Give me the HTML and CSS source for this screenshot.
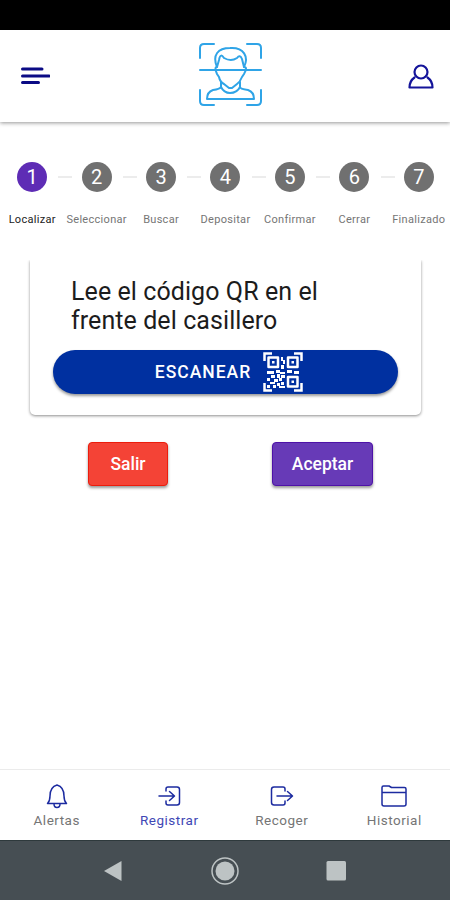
FILE: index.html
```html
<!DOCTYPE html>
<html lang="es">

<head>
    <meta charset="UTF-8">
    <meta name="viewport" content="width=device-width, initial-scale=1.0">
    <title>Registrar</title>
    <link rel="stylesheet" href="styles.css">
</head>

<body>
    <div class="status-bar"></div>
    <header class="header">
        <svg class="menu" width="30" height="20" viewBox="0 0 30 20">
            <path d="M2.500 3H22M2.500 10H29M2.500 16.500H18.500"/>
        </svg>
        <svg class="logo" width="66" height="66" viewBox="0 0 66 66">
            <path class="corner" d="M2 16V6q0-4 4-4H16M49 2H59q4 0 4 4V16M2 48V59q0 4 4 4H16M49 63H59q4 0 4-4V48"/>
            <path d="M2 28H63"/>
            <path d="M19 25C14 13 20 6 32 6C46 5 51 15 46 25"/>
            <path d="M19 25L21 18C22 12 24 13 26 16Q33 20 39 16Q42 12 44 17L46 25Q50 25 46 32L44 35Q42 40 39 42L34 46H31L26 42Q22 40 21 35L19 32Q16 25 19 25"/>
            <path d="M23 40V45Q22 47 15 48Q9 50 9 57H56Q56 50 50 48Q42 47 42 45V40M23 45Q26 51 32 51Q39 51 42 45"/>
        </svg>
        <svg class="user" width="26" height="26" viewBox="0 0 26 26">
            <circle cx="13" cy="8" r="6.5"/>
            <path d="M6.5 13.5Q1.5 17 1.5 23.5H24.5Q24.5 17 19.5 13.5"/>
        </svg>
    </header>

    <main class="main">
        <div class="steps">
            <div class="step active"><span class="number">1</span><span class="label">Localizar</span></div>
            <div class="step"><span class="number">2</span><span class="label">Seleccionar</span></div>
            <div class="step"><span class="number">3</span><span class="label">Buscar</span></div>
            <div class="step"><span class="number">4</span><span class="label">Depositar</span></div>
            <div class="step"><span class="number">5</span><span class="label">Confirmar</span></div>
            <div class="step"><span class="number">6</span><span class="label">Cerrar</span></div>
            <div class="step"><span class="number">7</span><span class="label">Finalizado</span></div>
        </div>

        <div class="card-wrap">
            <div class="card">
                <h2 class="title">Lee el código QR en el frente del casillero</h2>
                <button class="scan">
                    <span>ESCANEAR</span>
                    <svg width="40" height="40" viewBox="0 0 40 40">
                        <path class="frame" d="M1.5 9V1.5H9M31 1.5H38.5V9M1.5 31V38.5H9M31 38.5H38.5V31"/>
                        <path class="eye" d="M5.5 5.5h9.5v9.5h-9.5zM25 5.5h9.5v9.5h-9.5zM25 25h9.5v9.5h-9.5z"/>
                        <path class="dots" d="M9 9h2.5v2.5H9zM28.5 9H31v2.5h-2.5zM28.5 28.5H31V31h-2.5zM18 5h2v4h-2zM20 8h2v4h-2zM18 13h3v4h-3zM4 19h7v3H4zM13 18h4v3h-4zM17 20h5v2h-5zM24 18h5v3h-5zM31 19h5v3h-5zM8 23h4v3H8zM14 22h3v4h-3zM18 23h4v3h-4zM4 26h3v3H4zM11 27h4v3h-4zM16 26h3v3h-3zM7 30h5v2H7zM4 33h3v3H4zM10 33h3v3h-3zM14 31h3v3h-3zM18 30h3v3h-3zM16 34h6v2h-6z"/>
                    </svg>
                </button>
            </div>
        </div>

        <div class="actions">
            <button class="btn exit">Salir</button>
            <button class="btn accept">Aceptar</button>
        </div>
    </main>

    <nav class="tabs">
        <a class="tab">
            <svg width="28" height="26" viewBox="0 0 28 26">
                <path d="M4.5 20.5Q7 18 7 13Q7 4 14 2Q21 4 21 13Q21 18 23.5 20.5ZM11 21Q11 24.5 14 24.5Q17 24.5 17 21"/>
            </svg>
            <span>Alertas</span>
        </a>
        <a class="tab selected">
            <svg width="28" height="26" viewBox="0 0 28 26">
                <path d="M11 8V6q0-2 2-2H22q2.500 0 2.500 2.500V19.500q0 2.500-2.500 2.500H13q-2 0-2-2V18M4 13H19M14.500 8.500L19.500 13L14.500 17.500"/>
            </svg>
            <span>Registrar</span>
        </a>
        <a class="tab">
            <svg width="28" height="26" viewBox="0 0 28 26">
                <path d="M17 8V6q0-2-2-2H6q-2.500 0-2.500 2.500V19.500q0 2.500 2.500 2.500H15q2 0 2-2V18M9 13H24M19.500 8.500L24.500 13L19.500 17.500"/>
            </svg>
            <span>Recoger</span>
        </a>
        <a class="tab">
            <svg width="28" height="26" viewBox="0 0 28 26">
                <path d="M2 9.500V4.500Q2 3 3.500 3H9L11.500 4.500H24.500Q26 4.500 26 6V21Q26 23 24 23H4Q2 23 2 21V9.500H26"/>
            </svg>
            <span>Historial</span>
        </a>
    </nav>

    <div class="system-bar">
        <svg width="30" height="30" viewBox="0 0 30 30"><path d="M5 15L22.500 5V25Z"/></svg>
        <svg width="30" height="30" viewBox="0 0 30 30"><circle class="ring" cx="15" cy="15" r="13"/><circle cx="15" cy="15" r="9.500"/></svg>
        <svg width="30" height="30" viewBox="0 0 30 30"><rect x="5.500" y="5" width="19.500" height="19.500" rx="1.500"/></svg>
    </div>
</body>

</html>
```

FILE: styles.css
```css
* {
    margin: 0;
    padding: 0;
    box-sizing: border-box;
}
body {
    height: 900px;
    display: flex;
    flex-direction: column;
    font-family: Roboto, sans-serif;
    background-color: #fff;
    overflow: hidden;
}
svg {
    display: block;
    fill: none;
    stroke-linecap: round;
    stroke-linejoin: round;
}
button {
    border: none;
    font-family: inherit;
    color: #fff;
}
.status-bar {
    height: 30px;
    background-color: #000;
}
.header {
    height: 92px;
    padding: 0 16px 0 20px;
    display: grid;
    grid-template-columns: 1fr 66px 1fr;
    align-items: center;
    box-shadow: 0 1px 4px rgba(0,0,0,0.42);
}
.menu {
    stroke: #0b0b85;
    stroke-width: 3;
}
.logo {
    margin: -3px 0 0 4px;
    stroke: #2fa4e7;
    stroke-width: 2;
}
.user {
    justify-self: end;
    margin-top: 2px;
    stroke: #14149a;
    stroke-width: 2.2;
}
.main {
    flex: 1;
}
.steps {
    display: grid;
    grid-template-columns: repeat(7, 1fr);
    width: 451px;
    padding-top: 40px;
}
.step {
    position: relative;
    display: flex;
    flex-direction: column;
    align-items: center;
}
.step:not(:last-child)::after {
    content: "";
    position: absolute;
    top: 14px;
    right: -8px;
    width: 14px;
    height: 2px;
    background-color: #ececec;
}
.number {
    width: 30px;
    height: 30px;
    line-height: 31px;
    border-radius: 50%;
    background-color: #707070;
    color: #fff;
    font-size: 20px;
    text-align: center;
}
.label {
    margin-top: 21px;
    line-height: 14px;
    font-size: 11px;
    letter-spacing: 0.3px;
    color: #757575;
    white-space: nowrap;
}
.active .number {
    background-color: #5e2cb5;
}
.active .label {
    color: #222;
}
/* hides the upper edge of the card shadow */
.card-wrap {
    margin-top: 33px;
    padding: 0 29px 5px 30px;
    overflow: hidden;
}
.card {
    height: 155px;
    padding: 17px 23px 0;
    border-radius: 0 0 5px 5px;
    box-shadow: 0 1px 3px rgba(0,0,0,0.45);
}
.title {
    width: 270px;
    margin-left: 18px;
    font-size: 25px;
    font-weight: 400;
    line-height: 29px;
    letter-spacing: 0.08px;
    color: #1c1c1c;
}
.scan {
    width: 345px;
    height: 44px;
    margin-top: 15px;
    padding-left: 7px;
    display: flex;
    align-items: center;
    justify-content: center;
    gap: 12px;
    border-radius: 22px;
    background-color: #0030a0;
    box-shadow: 0 2px 3px rgba(0,0,0,0.4);
    font-size: 17.5px;
    font-weight: 500;
    letter-spacing: 1px;
}
.frame {
    stroke: #fff;
    stroke-width: 2.5;
    stroke-linecap: butt;
    stroke-linejoin: miter;
}
.eye {
    stroke: #fff;
    stroke-width: 2.5;
}
.dots {
    fill: #fff;
}
.actions {
    display: flex;
    justify-content: space-between;
    padding: 22px 77px 0 88px;
}
.btn {
    height: 44px;
    border-radius: 4px;
    box-shadow: 0 2px 3px rgba(0,0,0,0.4);
    font-size: 17.5px;
    font-weight: 500;
}
.exit {
    width: 80px;
    background-color: #f44336;
    border: 1px solid #ec1c0c;
}
.accept {
    width: 101px;
    background-color: #673ab7;
    border: 1px solid #4e12a8;
}
.tabs {
    height: 71px;
    display: grid;
    grid-template-columns: repeat(4, 1fr);
    border-top: 1px solid #ebebeb;
}
.tab {
    padding: 13px 0 0 1px;
    display: flex;
    flex-direction: column;
    align-items: center;
    font-size: 13.5px;
    line-height: 22px;
    letter-spacing: 0.5px;
    color: #757575;
}
.tab svg {
    stroke: #1c2ba0;
    stroke-width: 1.5;
}
.tab.selected {
    color: #3f48b5;
}
.system-bar {
    height: 60px;
    display: flex;
    justify-content: center;
    align-items: center;
    gap: 81px;
    background-color: #464e53;
    border-top: 1px solid #2e393c;
}
.system-bar svg {
    fill: #bdc3c4;
}
.system-bar .ring {
    fill: none;
    stroke: #bdc3c4;
    stroke-width: 1.5;
}
```
